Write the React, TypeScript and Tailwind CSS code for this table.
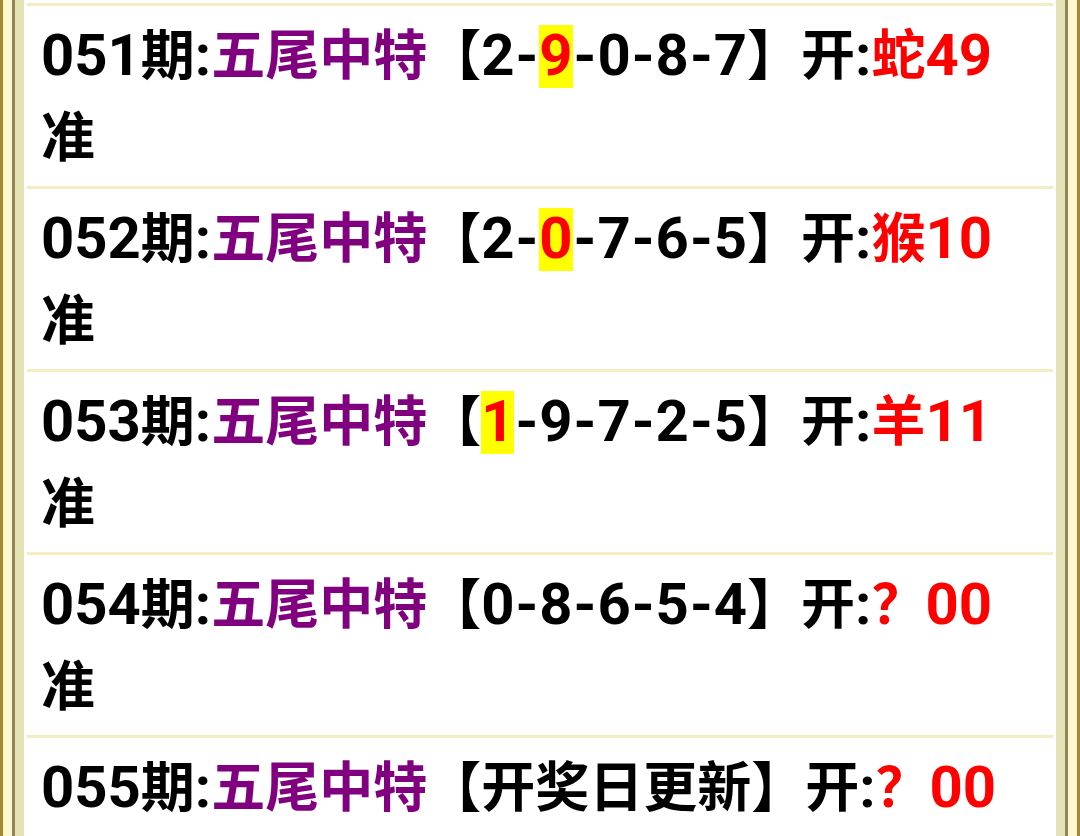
import React from "react";

type Seg = { t: string; c?: string };

const BLACK = "text-black";
const PURPLE = "text-[#800080]";
const RED = "text-[#ff0000]";
const HL = "bg-[#ffff00] text-[#ff0000]";

const rows: Seg[][] = [
  [
    { t: "051期:", c: BLACK },
    { t: "五尾中特", c: PURPLE },
    { t: "【2-", c: BLACK },
    { t: "9", c: HL },
    { t: "-0-8-7】开:", c: BLACK },
    { t: "蛇49", c: RED },
    { t: "准", c: BLACK },
  ],
  [
    { t: "052期:", c: BLACK },
    { t: "五尾中特", c: PURPLE },
    { t: "【2-", c: BLACK },
    { t: "0", c: HL },
    { t: "-7-6-5】开:", c: BLACK },
    { t: "猴10", c: RED },
    { t: "准", c: BLACK },
  ],
  [
    { t: "053期:", c: BLACK },
    { t: "五尾中特", c: PURPLE },
    { t: "【", c: BLACK },
    { t: "1", c: HL },
    { t: "-9-7-2-5】开:", c: BLACK },
    { t: "羊11", c: RED },
    { t: "准", c: BLACK },
  ],
  [
    { t: "054期:", c: BLACK },
    { t: "五尾中特", c: PURPLE },
    { t: "【0-8-6-5-4】开:", c: BLACK },
    { t: "？00", c: RED },
    { t: "准", c: BLACK },
  ],
  [
    { t: "055期:", c: BLACK },
    { t: "五尾中特", c: PURPLE },
    { t: "【开奖日更新】开:", c: BLACK },
    { t: "？00", c: RED },
  ],
];

function runs(text: string) {
  const out: { s: string; kind: "latin" | "dash" | "cjk" }[] = [];
  for (const ch of text) {
    const kind = ch === "-" ? "dash" : /[0-9:]/.test(ch) ? "latin" : "cjk";
    const last = out[out.length - 1];
    if (last && last.kind === kind && kind !== "dash") last.s += ch;
    else out.push({ s: ch, kind });
  }
  return out;
}

function Segment({ seg }: { seg: Seg }) {
  return (
    <span className={seg.c}>
      {runs(seg.t).map((r, i) =>
        r.kind === "cjk" ? (
          <span key={i}>{r.s}</span>
        ) : r.kind === "dash" ? (
          <span key={i} className="mx-[1px] text-[58px] leading-none">
            {r.s}
          </span>
        ) : (
          <span key={i} className="text-[58px] leading-none">
            {r.s}
          </span>
        )
      )}
    </span>
  );
}

export default function App() {
  return (
    <div className="h-[836px] w-[1080px] overflow-hidden bg-white">
      <div className="h-full border-x-[3px] border-[#a8882f]">
        <div className="h-full border-x-[9px] border-[#fff7d1]">
          <div className="h-full border-x-[3px] border-[#8f875a]">
            <div className="h-full border-x-[9px] border-[#e5e3b6]">
              <div
                className="h-full bg-white px-[3px] pt-[3px] font-bold text-black"
                style={{ fontFamily: 'Roboto, "Noto Sans CJK SC", sans-serif' }}
              >
                {rows.map((r, idx) => (
                  <div
                    key={idx}
                    className="border-t-[3px] border-[#f6eec3] px-[14px] pt-[10px] pb-[6px] text-[54px] leading-[82px]"
                  >
                    {r.map((s, i) => (
                      <Segment key={i} seg={s} />
                    ))}
                  </div>
                ))}
              </div>
            </div>
          </div>
        </div>
      </div>
    </div>
  );
}
